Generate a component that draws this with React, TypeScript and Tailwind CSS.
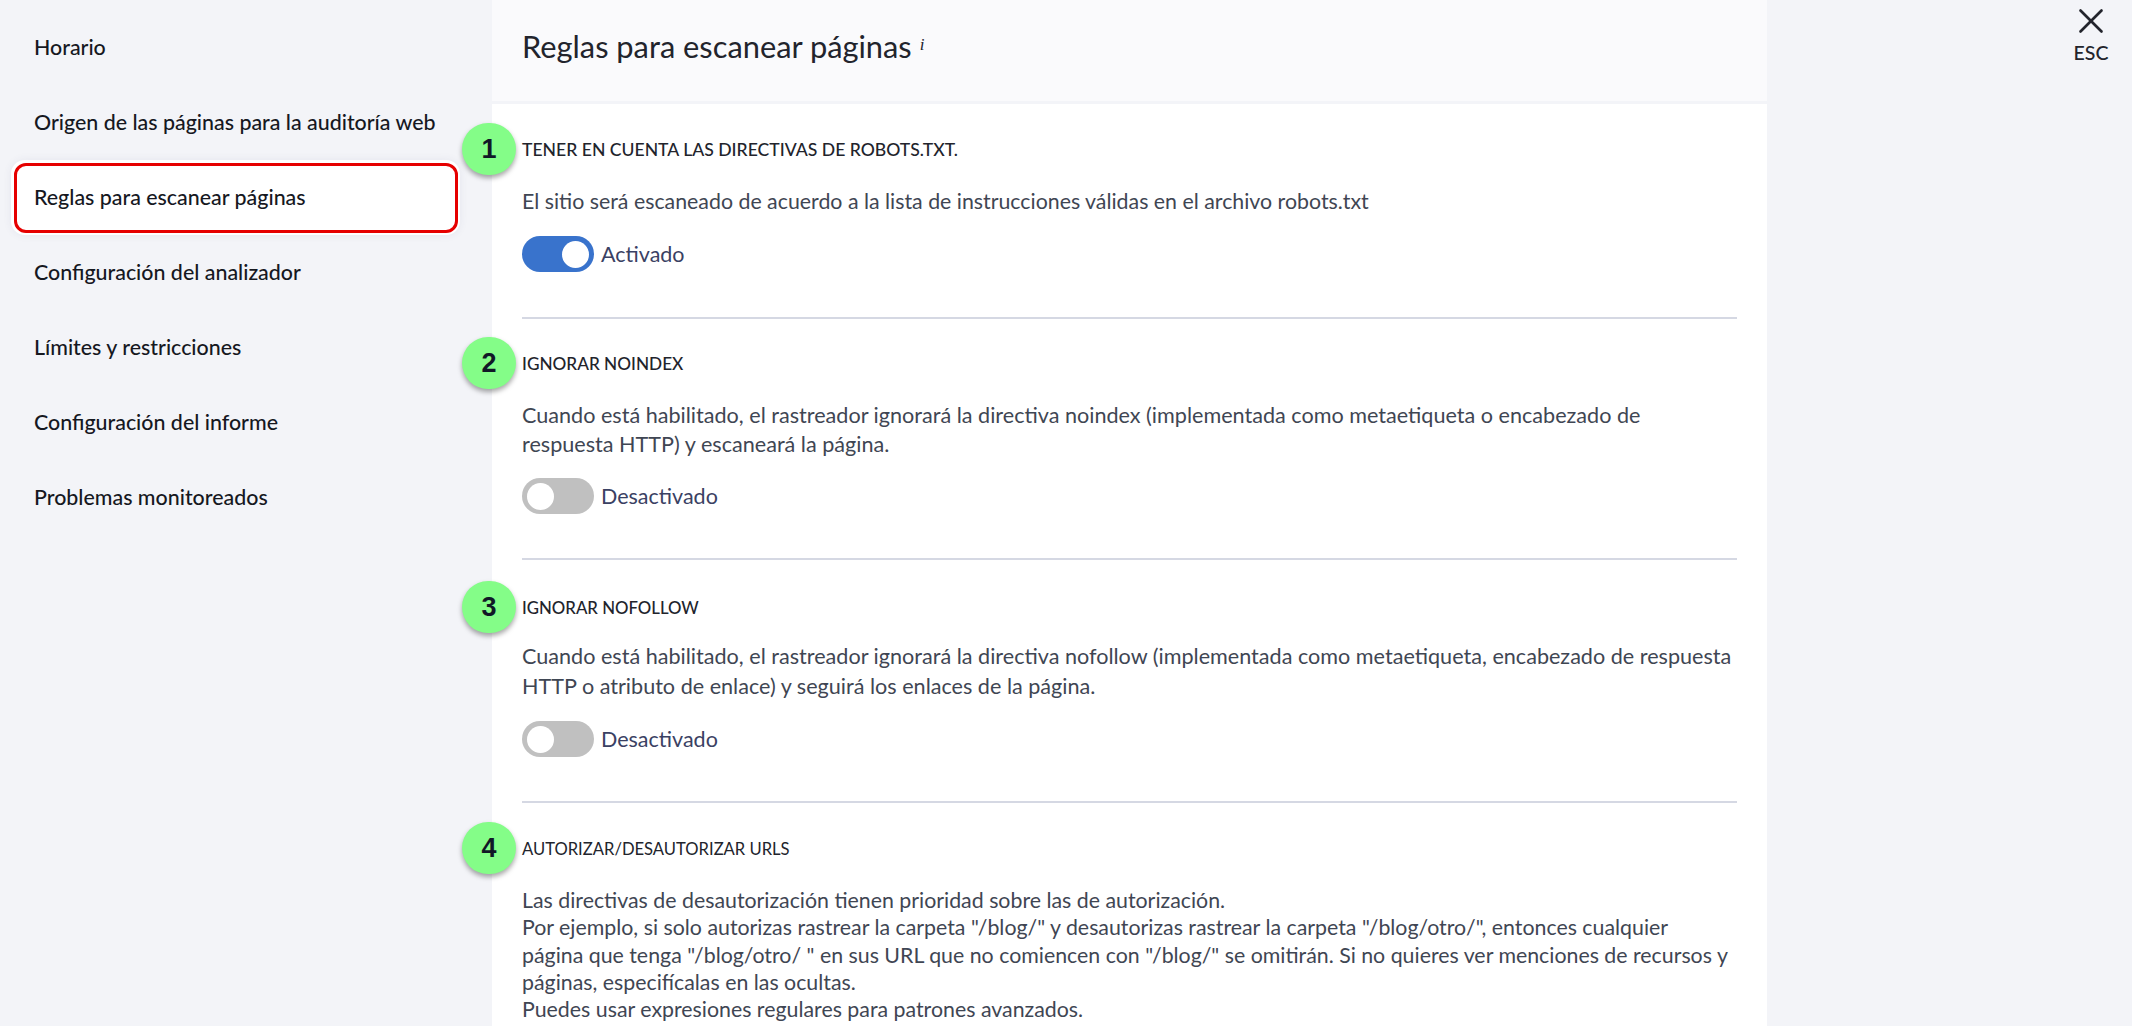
import React from "react";
import { X } from "lucide-react";

const menuItems = [
  "Horario",
  "Origen de las páginas para la auditoría web",
  "Reglas para escanear páginas",
  "Configuración del analizador",
  "Límites y restricciones",
  "Configuración del informe",
  "Problemas monitoreados",
];

function Badge({ n }: { n: number }) {
  return (
    <div className="absolute left-[-60px] top-[-17px] flex h-[52px] w-[54px] items-center justify-center rounded-full bg-[#84fd88] font-['Liberation_Sans',sans-serif] text-[27px] font-bold text-[#111827] shadow-[0_3px_5px_rgba(0,0,0,0.35)]">
      {n}
    </div>
  );
}

function Toggle({ on }: { on: boolean }) {
  return (
    <div className="flex items-center gap-[7px]">
      <div
        className={
          on
            ? "flex h-9 w-[72px] items-center justify-end rounded-full bg-[#3973cc] pr-[5px]"
            : "flex h-9 w-[72px] items-center justify-start rounded-full bg-[#c0c0c0] pl-[5px]"
        }
      >
        <div className="h-[27px] w-[27px] rounded-full bg-white" />
      </div>
      <span className="text-[21.5px] text-[#3a4163]">{on ? "Activado" : "Desactivado"}</span>
    </div>
  );
}

function Section({
  n,
  title,
  titleClass,
  children,
  className,
}: {
  n: number;
  title: string;
  titleClass: string;
  children: React.ReactNode;
  className: string;
}) {
  return (
    <section className={className}>
      <div className="relative">
        <Badge n={n} />
        <h3 className={titleClass}>{title}</h3>
      </div>
      {children}
    </section>
  );
}

export default function App() {
  return (
    <div className="flex h-screen overflow-hidden bg-[#f3f4f8] font-['Lato',sans-serif]">
      <aside className="w-[492px] shrink-0 pt-[10px] pl-[11px]">
        {menuItems.map((item) => {
          const active = item === "Reglas para escanear páginas";
          return (
            <div
              key={item}
              className={
                active
                  ? "relative flex h-[75px] w-[449px] items-center rounded-[14px] bg-white pl-[23px] text-[21.4px] font-medium text-[#16181f] shadow-[0_0_8px_rgba(60,70,110,0.08)]"
                  : "flex h-[75px] w-[449px] items-center pl-[23px] text-[21.4px] font-medium text-[#16181f]"
              }
            >
              {item}
              {active && (
                <div className="absolute top-[3px] right-[2px] bottom-[2px] left-[3px] rounded-[12px] border-[3px] border-[#e60000]" />
              )}
            </div>
          );
        })}
      </aside>

      <main className="w-[1275px] shrink-0 bg-white">
        <header className="flex h-[104px] items-start border-b-[3px] border-[#f3f4f8] bg-[#fafafc] pt-[27px] pl-[30px]">
          <h2 className="text-[30.8px] leading-[40px] text-[#22242c]">
            Reglas para escanear páginas
            <sup className="ml-2 font-['Liberation_Serif',serif] text-[17px] italic">i</sup>
          </h2>
        </header>

        <div className="px-[30px]">
          <Section
            n={1}
            title="Tener en cuenta las directivas de robots.txt."
            titleClass="text-[17.6px] leading-[20px] font-medium text-[#22242c] uppercase"
            className="border-b-2 border-[#d5d8e3] pt-[36px] pb-[45px]"
          >
            <p className="mt-[27px] text-[21.33px] leading-[29px] text-[#3f4653]">
              El sitio será escaneado de acuerdo a la lista de instrucciones válidas en el archivo robots.txt
            </p>
            <div className="mt-[20px]">
              <Toggle on />
            </div>
          </Section>

          <Section
            n={2}
            title="Ignorar noindex"
            titleClass="text-[17.2px] leading-[20px] font-medium text-[#22242c] uppercase"
            className="border-b-2 border-[#d5d8e3] pt-[35px] pb-[44px]"
          >
            <p className="mt-[27px] text-[21.6px] leading-[29px] text-[#3f4653]">
              Cuando está habilitado, el rastreador ignorará la directiva noindex (implementada como metaetiqueta o
              encabezado de
              <br />
              respuesta HTTP) y escaneará la página.
            </p>
            <div className="mt-[19px]">
              <Toggle on={false} />
            </div>
          </Section>

          <Section
            n={3}
            title="Ignorar nofollow"
            titleClass="text-[16.8px] leading-[20px] font-medium text-[#22242c] uppercase"
            className="border-b-2 border-[#d5d8e3] pt-[38px] pb-[44px]"
          >
            <p className="mt-[24px] text-[21.6px] leading-[29.5px] text-[#3f4653]">
              Cuando está habilitado, el rastreador ignorará la directiva nofollow (implementada como metaetiqueta,
              encabezado de respuesta
              <br />
              HTTP o atributo de enlace) y seguirá los enlaces de la página.
            </p>
            <div className="mt-[20px]">
              <Toggle on={false} />
            </div>
          </Section>

          <Section
            n={4}
            title="Autorizar/desautorizar URLs"
            titleClass="text-[16.6px] leading-[20px] text-[#22242c] uppercase"
            className="pt-[36px]"
          >
            <p className="mt-[28px] text-[21.33px] leading-[27.3px] text-[#3f4653]">
              Las directivas de desautorización tienen prioridad sobre las de autorización.
              <br />
              Por ejemplo, si solo autorizas rastrear la carpeta "/blog/" y desautorizas rastrear la carpeta
              "/blog/otro/", entonces cualquier
              <br />
              página que tenga "/blog/otro/ " en sus URL que no comiencen con "/blog/" se omitirán. Si no quieres ver
              menciones de recursos y
              <br />
              páginas, especifícalas en las ocultas.
              <br />
              Puedes usar expresiones regulares para patrones avanzados.
            </p>
          </Section>
        </div>
      </main>

      <div className="flex flex-1 justify-end pt-[0px] pr-[23px]">
        <div className="flex w-[36px] flex-col items-center text-[#22242c]">
          <X size={42} strokeWidth={1.5} />
          <span className="mt-[-1px] text-[19.5px] leading-[24px] font-medium">ESC</span>
        </div>
      </div>
    </div>
  );
}
